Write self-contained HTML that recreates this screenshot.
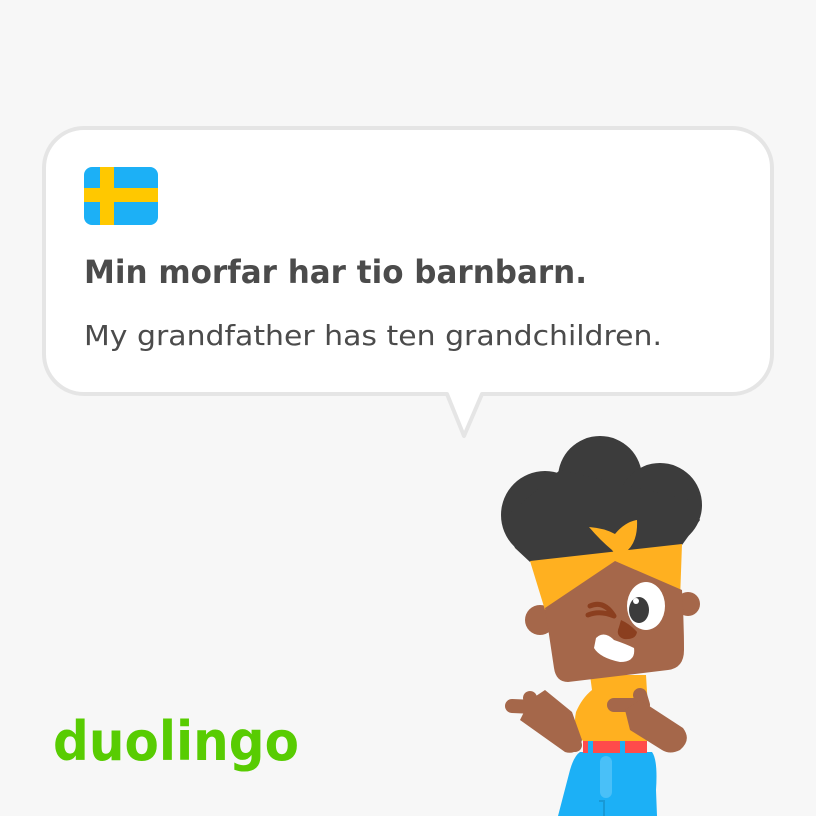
<!DOCTYPE html>
<html><head><meta charset="utf-8"><style>
html,body{margin:0;padding:0;background:#f7f7f7;}
body{width:816px;height:816px;position:relative;overflow:hidden;font-family:"DejaVu Sans","Liberation Sans",sans-serif;}
</style></head><body>
<svg width="816" height="816" viewBox="0 0 816 816" style="position:absolute;left:0;top:0">
  <path d="M84 128 H732 A40 40 0 0 1 772 168 V354 A40 40 0 0 1 732 394 H482 L464 436 L447 394 H84 A40 40 0 0 1 44 354 V168 A40 40 0 0 1 84 128 Z" fill="#fff" stroke="#e5e5e5" stroke-width="4" stroke-linejoin="round"/>
  <rect x="84" y="167" width="74" height="58" rx="8" fill="#1cb0f6"/>
  <rect x="100" y="167" width="14" height="58" fill="#ffc800"/>
  <rect x="84" y="188" width="74" height="14" fill="#ffc800"/>
  <text x="84" y="283" font-family="DejaVu Sans, Liberation Sans, sans-serif" font-weight="bold" font-size="32" fill="#4b4b4b" textLength="503" lengthAdjust="spacingAndGlyphs">Min morfar har tio barnbarn.</text>
  <text x="84" y="345" font-family="DejaVu Sans, Liberation Sans, sans-serif" font-size="28" fill="#4b4b4b" textLength="578" lengthAdjust="spacingAndGlyphs">My grandfather has ten grandchildren.</text>
  <text x="53" y="760" font-family="DejaVu Sans, Liberation Sans, sans-serif" font-weight="bold" font-size="54" fill="#58cc02" textLength="246" lengthAdjust="spacingAndGlyphs">duolingo</text>

  <path d="M580 752 H652 Q658 760 656 790 L657 816 H558 L570 770 Q574 756 580 752 Z" fill="#1cb0f6"/>
  <rect x="600" y="756" width="12" height="42" rx="6" fill="#49c0f8"/>
  <path d="M599 801 H604 V816" stroke="#1899d6" stroke-width="2" fill="none"/>
  <rect x="583" y="741" width="64" height="12" fill="#ff4b4b"/>
  <rect x="588" y="741" width="5" height="12" fill="#1cb0f6"/>
  <rect x="620" y="741" width="5" height="12" fill="#1cb0f6"/>
  <path d="M590 675 H646 L650 741 H583 Q572 730 576 712 Q582 698 592 690 Z" fill="#ffb020"/>
  <path d="M512 706 L535 707 L530 698 M535 707 Q555 715 565 722 L575 745" stroke="#a5674a" stroke-width="14" stroke-linecap="round" stroke-linejoin="round" fill="none"/>
  <path d="M520 720 L565 752 Q578 756 582 740 L572 712 L545 690 L530 700 Z" fill="#a5674a"/>
  <path d="M614 705 H643 L640 695" stroke="#a5674a" stroke-width="14" stroke-linecap="round" stroke-linejoin="round" fill="none"/>
  <path d="M625 710 L640 700 L683 728 Q692 740 680 750 Q670 755 662 750 L630 730 Z" fill="#a5674a"/>
  <circle cx="540" cy="620" r="15" fill="#a5674a"/>
  <circle cx="688" cy="604" r="12" fill="#a5674a"/>
  <g fill="#3c3c3c">
    <circle cx="600" cy="478" r="42"/>
    <circle cx="545" cy="515" r="44"/>
    <circle cx="660" cy="505" r="42"/>
    <path d="M502 520 L515 548 L530 562 L682 545 L700 520 L690 500 L560 470 Z"/>
  </g>
  <path d="M530 561 L682 544 L680 600 L545 610 Z" fill="#ffb020"/>
  <path d="M589 527 Q600 540 612 550 L618 558 L628 550 Q638 540 637 520 Q625 522 615 534 Q604 528 589 527 Z" fill="#ffb020"/>
  <path d="M545 608 L615 561 L682 590 Q684 620 684 650 Q684 668 668 670 L568 682 Q556 682 554 668 Z" fill="#a5674a"/>
  <ellipse cx="646" cy="606" rx="19" ry="24" fill="#fff"/>
  <ellipse cx="639" cy="610" rx="10" ry="13" fill="#3c3c3c"/>
  <circle cx="636" cy="601" r="3" fill="#fff"/>
  <path d="M590 606 Q604 600 614 616 M588 615 Q600 610 614 616" stroke="#8b3f1f" stroke-width="5" stroke-linecap="round" fill="none"/>
  <path d="M621 620 Q630 624 637 632 Q636 640 624 639 Q615 636 619 627 Z" fill="#8b3f1f"/>
  <path d="M596 638 Q604 630 614 640 Q626 644 634 648 Q636 662 620 662 Q600 658 594 648 Z" fill="#fff"/>
</svg>
</body></html>
